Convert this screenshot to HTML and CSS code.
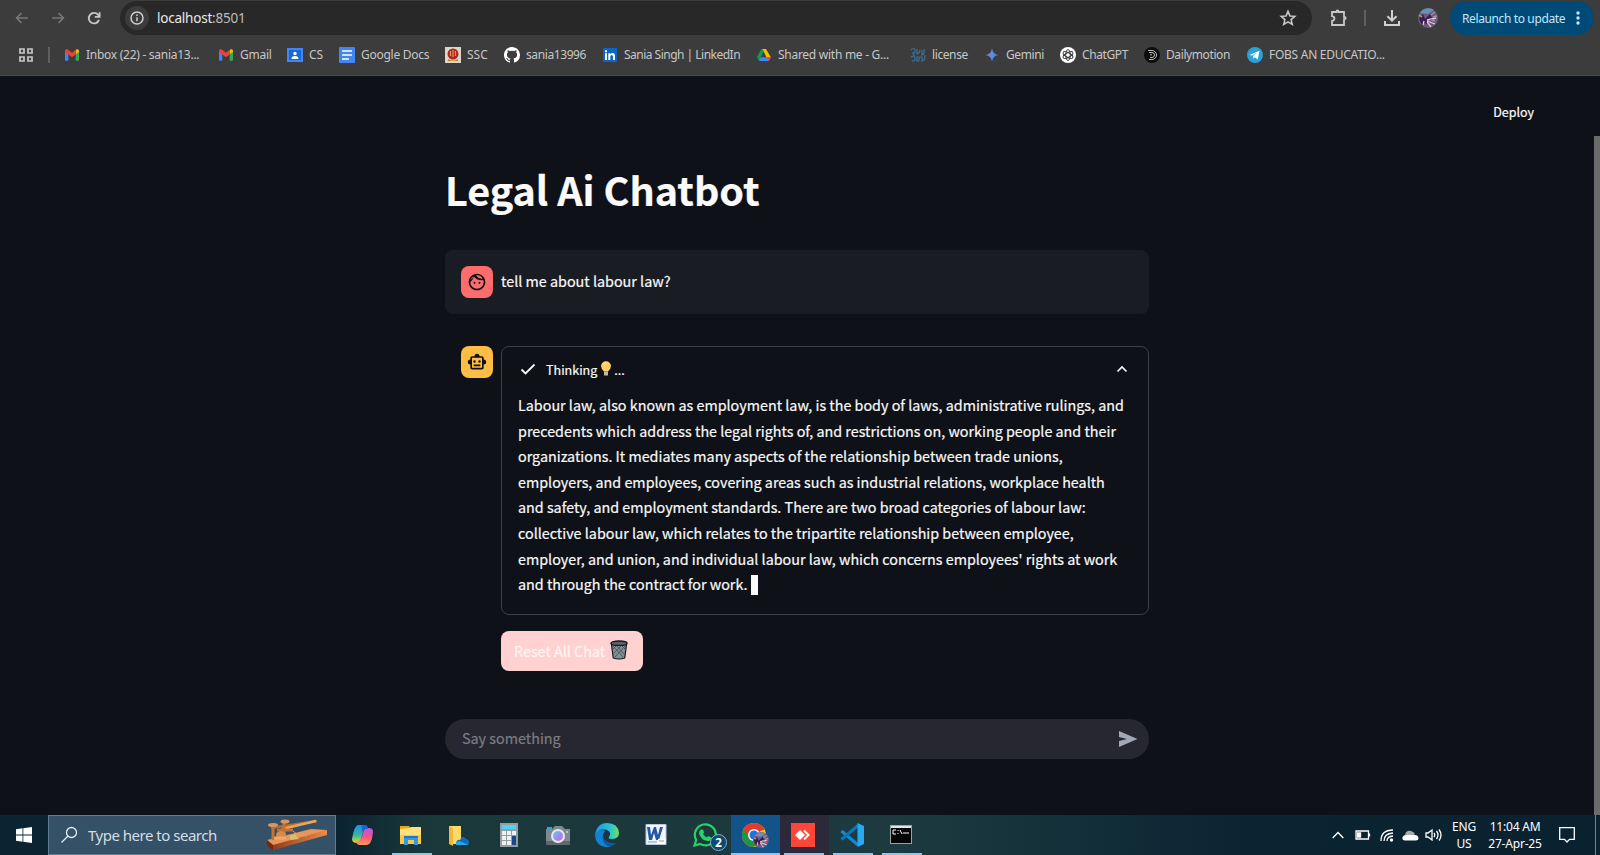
FILE: index.html
```html
<!DOCTYPE html>
<html lang="en"><head><meta charset="utf-8"><title>Legal Ai Chatbot</title><link rel="stylesheet" href="styles.css"></head>
<body>
<svg width="0" height="0" class="defs" aria-hidden="true"><defs>
<linearGradient id="gm"><stop offset="0" stop-color="#a067b5"/><stop offset=".5" stop-color="#5a8fe0"/><stop offset="1" stop-color="#2f80d8"/></linearGradient>
<linearGradient id="cpA" x1="0" y1="0" x2="0" y2="1"><stop offset="0" stop-color="#1f8df0"/><stop offset=".55" stop-color="#2fb7a0"/><stop offset="1" stop-color="#e8d32c"/></linearGradient>
<linearGradient id="cpB" x1="0" y1="0" x2="0" y2="1"><stop offset="0" stop-color="#b35ae8"/><stop offset=".5" stop-color="#f0528c"/><stop offset="1" stop-color="#ff9a50"/></linearGradient>
<linearGradient id="edA" x1="0" y1="0" x2="1" y2="0"><stop offset="0" stop-color="#159de0"/><stop offset=".6" stop-color="#2ac0d8"/><stop offset="1" stop-color="#6be35a"/></linearGradient>
<linearGradient id="wood" x1="0" y1="0" x2="1" y2="0"><stop offset="0" stop-color="#8a3512"/><stop offset="1" stop-color="#e98b48"/></linearGradient>
<linearGradient id="lens" x1="0" y1="0" x2="1" y2="1"><stop offset="0" stop-color="#63c9f5"/><stop offset="1" stop-color="#d05de0"/></linearGradient>
<symbol id="gmail" viewBox="0 0 16 16"><path d="M1 4.5v8.2c0 .6.4 1 1 1h2.300V7z" fill="#4285f4"/><path d="M15 4.500v8.200c0 .6-.4 1-1 1h-2.300V7z" fill="#34a853"/><path d="M11.700 3.700V7.300L15 4.900V4c0-1.700-1.800-2.200-2.700-1.500z" fill="#fbbc04"/><path d="M1 4.900V4c0-1.700 1.700-2.200 2.700-1.500L8 5.800l4.300-3.300-.6 4.900L8 10.200 4.300 7.400z" fill="#ea4335"/></symbol>
<symbol id="photo" viewBox="0 0 20 20"><circle cx="10" cy="10" r="10" fill="#6b5a80"/><path d="M2 5a10 10 0 0 1 14-3L10 6z" fill="#6792b5"/><path d="M1 10l4-4 2 5 5-5 2 4-5 2 3 6-5-3-3 3z" fill="#3b1b54"/><path d="M9 12l9-2M9 13l8 3M9 14l4 5M6 13l-1 4" stroke="#ded0cb" stroke-width="1.300"/><path d="M13 7l4-3M15 9l4-1M12 11l5 2" stroke="#a68ba9" stroke-width="1.500"/><path d="M1 7l3 2" stroke="#b48762" stroke-width="2"/></symbol>
</defs></svg>

<header class="browser">
 <div class="toolbar">
  <svg class="nav" viewBox="0 0 24 24" width="20" height="20" fill="none" stroke="#777" stroke-width="2"><path d="M19 12H6M11.500 6L5.500 12l6 6"/></svg>
  <svg class="nav" viewBox="0 0 24 24" width="20" height="20" fill="none" stroke="#777" stroke-width="2"><path d="M5 12h13M12.500 6l6 6-6 6"/></svg>
  <svg class="nav" viewBox="0 0 24 24" width="20" height="20" fill="none" stroke="#c8c8c8" stroke-width="2.200"><path d="M18 14.300A6.300 6.300 0 1 1 16.800 8L18.500 10"/><path d="M18.700 5v5.700H13"/></svg>
  <div class="address"><span class="info"><svg viewBox="0 0 16 16" width="16" height="16" fill="none" stroke="#d0d0d0" stroke-width="1.500"><circle cx="8" cy="8" r="6"/><path d="M8 7.200v4M8 4.600v1.500"/></svg></span>
   <span class="url">localhost<i>:8501</i></span>
   <svg class="star" viewBox="0 0 24 24" width="20" height="20" fill="none" stroke="#c8c8c8" stroke-width="1.900"><path d="M12 4l2.300 5.500 5.900.5-4.500 3.900 1.400 5.800-5.100-3.100-5.100 3.100 1.400-5.800L3.800 10l5.900-.5z"/></svg></div>
  <svg class="puzzle" viewBox="0 0 18 18" width="18" height="18" fill="none" stroke="#c8c8c8" stroke-width="1.800"><path d="M2 3h4.500V2.500Q6.500 1.500 7.500 1.500T8.500 2.500V3H14v5h.5q1.200 0 1.200 1.100T14.500 10.200H14V16H2v-4q2.400-.4 2.400-2.400T2 7.200z"/></svg>
  <span class="bar"></span>
  <svg class="download" viewBox="0 0 18 18" width="18" height="18" fill="none" stroke="#d0d0d0" stroke-width="2"><path d="M9 1v10.500M4.500 7.200L9 11.700l4.500-4.500M2 12v4h14v-4"/></svg>
  <svg class="profile" width="20" height="20"><use href="#photo"/></svg>
  <div class="relaunch"><span>Relaunch to update</span><svg width="4" height="14" viewBox="0 0 4 14" fill="#c2e7ff"><circle cx="2" cy="2" r="1.700"/><circle cx="2" cy="7" r="1.700"/><circle cx="2" cy="12" r="1.700"/></svg></div>
 </div>
 <nav class="bookmarks">
  <svg class="apps" viewBox="0 0 14 14" width="14" height="14" fill="none" stroke="#c8c8c8" stroke-width="1.700"><path d="M1 1h4v4H1zM9 1h4v4H9zM1 9h4v4H1zM9 9h4v4H9z"/></svg>
  <span class="bar"></span>
  <div class="marks">
  <a><svg><use href="#gmail"/></svg><span class="normal">Inbox (22) - sania13...</span></a>
  <a><svg><use href="#gmail"/></svg><span class="normal">Gmail</span></a>
  <a><svg viewBox="0 0 16 16"><path fill="#4285f4" d="M0 1h16v14H0z"/><path fill="#1967d2" d="M2 3h12v10H2z"/><circle cx="8" cy="6.500" r="1.700" fill="#fff"/><path fill="#fff" d="M4.500 12q0-3 3.500-3t3.500 3z"/></svg><span>CS</span></a>
  <a><svg viewBox="0 0 16 16"><rect width="16" height="16" rx="1" fill="#4285f4"/><path stroke="#fff" stroke-width="1.700" d="M3 4h10M3 8h10M3 12h7"/></svg><span class="normal">Google Docs</span></a>
  <a><svg viewBox="0 0 16 16"><path fill="#ddd5c8" d="M0 0h16v16H0z"/><circle cx="8" cy="7" r="5.500" fill="#b42222"/><path d="M8 3v7M5.500 4v5M10.500 4v5" stroke="#d7a24c" stroke-width="1.200"/><path d="M3 12q5 3 10 0v2H3z" fill="#b58422"/></svg><span>SSC</span></a>
  <a><svg viewBox="0 0 16 16"><path fill="#fff" d="M8 0C3.580 0 0 3.580 0 8c0 3.540 2.290 6.530 5.470 7.590.4.070.55-.17.55-.38 0-.19-.01-.82-.01-1.490-2.010.37-2.530-.49-2.690-.94-.09-.23-.48-.94-.82-1.130-.28-.15-.68-.52-.01-.53.63-.01 1.080.58 1.230.82.72 1.210 1.870.87 2.330.66.070-.52.28-.87.51-1.070-1.780-.2-3.640-.89-3.640-3.950 0-.87.31-1.590.82-2.150-.08-.2-.36-1.020.08-2.120 0 0 .67-.21 2.200.82.640-.18 1.320-.27 2-.27s1.360.09 2 .27c1.530-1.040 2.200-.82 2.200-.82.44 1.100.16 1.920.08 2.120.51.56.82 1.270.82 2.150 0 3.070-1.870 3.750-3.650 3.950.29.25.54.73.54 1.480 0 1.070-.01 1.930-.01 2.200 0 .21.15.46.55.38A8.010 8.010 0 0 0 16 8c0-4.420-3.580-8-8-8z"/></svg><span class="tight">sania13996</span></a>
  <a><svg viewBox="0 0 16 16"><path fill="#0a66c2" d="M1 1h14v14H1z"/><path fill="#fff" d="M3 6.300h2V13H3zM3 3.200h2v2H3zM6.300 6.300h2v1Q9 6.100 10.500 6.100 13 6.100 13 9v4h-2V9.500Q11 7.900 9.700 7.900T8.300 9.500V13h-2z"/></svg><span class="tighter">Sania Singh | LinkedIn</span></a>
  <a><svg viewBox="0 0 16 16"><path fill="#0f9d58" d="M5.500 2h3L3.200 14 1 10z"/><path fill="#fbbc04" d="M6.500 2h3.500l5 8.500h-4.500z"/><path fill="#4285f4" d="M4.800 10.300H15L12.800 14H3z"/><path fill="#ea4335" d="M11.300 10.300H15L12.800 14z"/></svg><span class="normal">Shared with me - G...</span></a>
  <a><svg viewBox="0 0 16 16" fill="none" stroke="#3d7199" stroke-width="1.200"><path d="M1 3q3-3 4 0t-3 3q4 1 1 3M7 2v5q3-1 3-4M12 3v5q3-1 2-6M1 10q3-2 4 1t-3 3M7 9v5h2v-4h3v4q3 0 3-6"/></svg><span class="tight">license</span></a>
  <a><svg viewBox="0 0 16 16"><path fill="url(#gm)" d="M8 1.500Q8.800 7.200 14.500 8 8.800 8.800 8 14.500 7.200 8.800 1.500 8 7.200 7.200 8 1.500z"/></svg><span class="tight">Gemini</span></a>
  <a><svg viewBox="0 0 16 16"><circle cx="8" cy="8" r="8" fill="#fff"/><g fill="none" stroke="#333" stroke-width=".9"><ellipse cx="8" cy="8" rx="2.300" ry="5.500"/><ellipse cx="8" cy="8" rx="2.300" ry="5.500" transform="rotate(60 8 8)"/><ellipse cx="8" cy="8" rx="2.300" ry="5.500" transform="rotate(120 8 8)"/></g></svg><span class="tight">ChatGPT</span></a>
  <a><svg viewBox="0 0 16 16"><circle cx="8" cy="8" r="8" fill="#0d0d0d"/><g fill="none" stroke="#bbb" stroke-width="1"><path d="M4 3.500h4a4.500 4.500 0 0 1 0 9H5M5 5.500h3a2.500 2.500 0 0 1 0 5H6M6 7.800h2"/></g></svg><span class="tight">Dailymotion</span></a>
  <a><svg viewBox="0 0 16 16"><circle cx="8" cy="8" r="8" fill="#2ba0da"/><path fill="#fff" d="M2.500 7.900l10-4.100-1.700 8.700-3-2.200-1.500 1.400-.2-2.600 4.100-3.700-5 3.100z"/></svg><span class="normal">FOBS AN EDUCATIO...</span></a>
  </div>
 </nav>
</header>

<main class="page">
 <div class="pagebar"><span>Deploy</span></div>
 <div class="column">
  <h1>Legal Ai Chatbot</h1>
  <section class="message user"><div class="avatar red"><svg viewBox="0 0 24 24" width="20" height="20"><path fill="#0e1117" d="M10.250 13a1.250 1.250 0 1 1-2.500 0 1.250 1.250 0 0 1 2.500 0zM15 11.750a1.250 1.250 0 1 0 0 2.500 1.250 1.250 0 0 0 0-2.500zM22 12c0 5.520-4.480 10-10 10S2 17.520 2 12 6.480 2 12 2s10 4.480 10 10zM10.660 4.120A9.950 9.950 0 0 0 17.500 8c.46 0 .91-.05 1.340-.12A8 8 0 0 0 10.660 4.120zM4.420 9.470a8.050 8.050 0 0 0 3.660-4.440 8.040 8.040 0 0 0-3.660 4.440zM20 12c0-.78-.12-1.530-.33-2.240-.7.150-1.420.24-2.170.24a11.950 11.950 0 0 1-9.140-4.250A12 12 0 0 1 4.010 11.860C4 11.900 4 11.950 4 12a8 8 0 0 0 16 0z"/></svg></div><p>tell me about labour law?</p></section>
  <section class="message bot"><div class="avatar gold"><svg viewBox="0 0 24 24" width="20" height="20"><path fill="#0e1117" fill-rule="evenodd" d="M20 9V7c0-1.100-.9-2-2-2h-3a3 3 0 0 0-6 0H6c-1.100 0-2 .9-2 2v2a3 3 0 0 0 0 6v4c0 1.100.9 2 2 2h12c1.100 0 2-.9 2-2v-4a3 3 0 0 0 0-6zm-2 10H6V7h12v12zM9 10a1.500 1.500 0 1 1 0 3 1.500 1.500 0 0 1 0-3zM15 10a1.500 1.500 0 1 1 0 3 1.500 1.500 0 0 1 0-3zM8 15h8v2H8z"/></svg></div>
   <div class="reply"><div class="status"><div class="summary"><svg viewBox="0 0 20 20" width="20" height="20" fill="none" stroke="#fafafa" stroke-width="1.800"><path d="M3.500 10.500l4 4 9-9"/></svg><span>Thinking</span><svg class="bulb" width="12" height="16" viewBox="0 0 12 16"><path fill="#ffcf65" d="M4 10.500Q1 7.500 1 5A5 4.700 0 0 1 11 5Q11 7.500 8 10.500z"/><path d="M3.500 3Q4.500 1.500 6 1.700" stroke="#fff0a8" fill="none"/><path fill="#c4b9a8" d="M4 10.500h4v4H4z"/></svg><span>...</span><svg class="chevron" viewBox="0 0 12 8" width="12" height="8" fill="none" stroke="#fafafa" stroke-width="1.700"><path d="M1.500 6.500L6 2l4.500 4.500"/></svg></div>
   <div class="answer"><p>Labour law, also known as employment law, is the body of laws, administrative rulings, and</p><p>precedents which address the legal rights of, and restrictions on, working people and their</p><p>organizations. It mediates many aspects of the relationship between trade unions,</p><p>employers, and employees, covering areas such as industrial relations, workplace health</p><p>and safety, and employment standards. There are two broad categories of labour law:</p><p>collective labour law, which relates to the tripartite relationship between employee,</p><p>employer, and union, and individual labour law, which concerns employees' rights at work</p><p>and through the contract for work.<span class="caret"></span></p></div></div>
   <button class="reset"><span>Reset All Chat</span><svg width="18" height="20" viewBox="0 0 18 20"><path d="M1.300 3.200L3.300 18q5.700 2 11.400 0l2-14.800z" fill="#839098" stroke="#15191c" stroke-width="1.200"/><path d="M3 6l10 11M7 6l7 8M12 6l3 3M15 6L5 17M11 6l-7 7M6 6L3 9" stroke="#4c575d"/><ellipse cx="9" cy="3.200" rx="8" ry="2.200" fill="#59666c" stroke="#15191c" stroke-width="1.300"/></svg></button></div></section>
  <div class="prompt"><span>Say something</span><svg viewBox="0 0 20 18" width="20" height="18"><path fill="#a3a8b8" d="M1 1L19.500 9 1 17V11L9 9 1 7z"/></svg></div>
 </div>
 <div class="scroll"></div>
</main>

<footer class="taskbar">
 <div class="start"><svg viewBox="0 0 16 16" width="16" height="16" fill="#fff"><path d="M0 2.200L6.500 1.300V7.600H0zM7.300 1.200L16 0v7.600H7.300zM0 8.400h6.500v6.300L0 13.800zM7.300 8.400H16V16l-8.700-1.200z"/></svg></div>
 <div class="search"><svg viewBox="0 0 18 18" width="18" height="18" fill="none" stroke="#e6edf2" stroke-width="1.300"><circle cx="11.500" cy="6.500" r="5"/><path d="M8 10L1.500 16.500"/></svg><span>Type here to search</span>
 <svg class="telegraph" viewBox="0 0 62 34" width="62" height="34"><path fill="url(#wood)" d="M1 22L44 15l17-3v5L7 32l-6-4z"/><path fill="#e6955b" d="M1 22l44-11 16 1L7 27z"/><path fill="#702b0f" d="M1 22l6 5v5l-6-4z"/><path fill="#d9bc73" d="M23 18l6-2 4 5-8 1z"/><path d="M5 10L51 3" stroke="#b96b2d" stroke-width="2.500"/><path d="M16 11l34-8" stroke="#eba563" stroke-width="2.500"/><path d="M26 12q5 6 15 6" stroke="#e0a369" fill="none"/><path d="M7 8v14M18 3v15M11 12h16" stroke="#c37131" stroke-width="3"/><ellipse cx="7" cy="7" rx="5" ry="2" fill="#dd945d"/><ellipse cx="19" cy="3.500" rx="4.500" ry="2" fill="#dd945d"/><ellipse cx="15" cy="17" rx="5" ry="4" fill="#d98948"/><path d="M8 20h12" stroke="#eca969" stroke-width="3"/></svg></div>
 <div class="tasks">
  <div class="task"><svg viewBox="0 0 24 24"><path fill="url(#cpA)" d="M8 2h7q2 0 3 3l-4 1-3 10q-1 4-4 4-5 0-5-4 2-13 6-14z"/><path fill="url(#cpB)" d="M17 5h2q4 0 4 4-1 10-4 12-1 1-3 1H9q-2 0-3-3l3-1q2-1 3-5l2-6q1-2 3-2z"/><path fill="#2361d0" d="M12 2h3q2 0 3 4h-3q-2 0-3 3-1-4 0-7z"/></svg></div>
  <div class="task open"><svg viewBox="0 0 24 24"><path fill="#e9a60d" d="M1 3h9l2 3H1z"/><path fill="#ffe07a" d="M1 6l9-1 2-1h10v17H1z"/><path fill="#ffc83d" d="M1 12h21v9H1z"/><path fill="#3498e7" d="M5 22v-9h14v9h-4v-5H9v5z"/><path fill="#1d78ca" d="M5 13h14v2H5z"/></svg></div>
  <div class="task"><svg viewBox="0 0 24 24"><path fill="#ffda6b" d="M1 3h12v18H1z"/><path fill="#efb83b" d="M1 3l4 2v18l-4-2z"/><path fill="#0f6cbd" d="M9 22q-2-2 0-4 1-2 3-1 2-6 6-1 3 0 3 4 0 2-3 2z"/><path fill="#2ca5ed" d="M8 22q-1-3 3-4l10 4z"/></svg></div>
  <div class="task"><svg viewBox="0 0 24 24"><path fill="#949da2" d="M3 0h18v24H3z"/><path fill="#50d3f5" d="M5 2h14v4H5z"/><path fill="#edf1f2" d="M5 8h4v4H5zM10 8h4v4h-4zM15 8h4v4h-4zM5 13h4v4H5zM10 13h4v4h-4zM5 18h4v4H5zM10 18h4v4h-4z"/><path fill="#164986" d="M15 13h4v9h-4z"/></svg></div>
  <div class="task"><svg viewBox="0 0 24 24"><path fill="#7e8990" d="M0 6h6l3-3h7l3 3h5v16H0z"/><path fill="#5e686e" d="M0 18h24v4H0z"/><path fill="#20a9e3" d="M1 4h5v2H1z"/><circle cx="12" cy="13" r="7" fill="#e6e8ed"/><circle cx="12" cy="13" r="5" fill="url(#lens)"/><circle cx="21" cy="9" r="1" fill="#c8d0d2"/></svg></div>
  <div class="task"><svg viewBox="0 0 24 24"><path fill="#0c59a4" d="M1 8q4-5 10-2-4 3-3 7 2 8 13 7-4 4-9 4Q0 23 0 12z"/><path fill="url(#edA)" d="M0 12Q2 0 12 0q11 0 12 10 0 6-8 6-3 0-2-2 3-5-2-7Q5 4 0 12z"/><path fill="#1581d1" d="M0 12q4-7 10-4-5 6 0 13 2 2 5 3Q1 25 0 12z"/></svg></div>
  <div class="task"><svg viewBox="0 0 24 24"><path fill="#f2f6fb" stroke="#b8c7da" d="M2 1.500h20v20H2z"/><path fill="#2457a4" d="M3 4l3 0 1 8 3-8h2l2 8 2-8h3l-4 13h-3l-2-7-2 7H5z"/><path d="M14 16l8-1-1 6h-8z" fill="#fff"/><path d="M4 19h9M15 18h5" stroke="#7d9bc2"/></svg></div>
  <div class="task wa"><svg viewBox="0 0 24 24"><path fill="none" stroke="#25d366" stroke-width="2.200" d="M1.500 22.500L3.200 17A10.500 10.500 0 1 1 7 20.900z"/><path fill="#25d366" d="M8 6.500l2 0 1.200 3-1.200 1.600q1.500 2.400 4 3.400l1.300-1.600 3.100 1.500q-.4 3.700-3.900 3.600Q8 17 6 10.500 6 7.500 8 6.500z"/></svg><b>2</b></div>
  <div class="task chrome"><svg viewBox="0 0 24 24"><circle cx="12" cy="12" r="12" fill="#fbc116"/><path fill="#e33b2e" d="M12 12L1.600 6A12 12 0 0 1 22.400 6z"/><path fill="#229342" d="M12 12L1.600 6A12 12 0 0 0 12 24l5-9z"/><path fill="#e33b2e" d="M1.600 6h20.800v1H12l-5 7z"/><circle cx="12" cy="12" r="6" fill="#fff"/><circle cx="12" cy="12" r="4.500" fill="#1a73e8"/></svg><svg class="badge"><use href="#photo"/></svg></div>
  <div class="task anydesk"><svg viewBox="0 0 24 24"><path fill="#ff4438" d="M0 0h24v24H0z"/><path fill="#fff" d="M4 12l5-5 5 5-5 5z"/><path d="M13 7.500l4.500 4.500-4.500 4.500" stroke="#fff" stroke-width="2" fill="none"/></svg></div>
  <div class="task open code"><svg viewBox="0 0 24 24"><path d="M1.500 8L18 22" stroke="#1289d2" stroke-width="3.300"/><path d="M1.500 16.500L18 2.500" stroke="#0875b8" stroke-width="3.300"/><path fill="#29a9f2" d="M17.500 0L24 3v18l-6.500 3z"/></svg></div>
  <div class="task open"><svg viewBox="0 0 24 24"><path fill="#9ca0a3" d="M1 2h22v19H1z"/><path fill="#e3e5e6" d="M2 3h20v2H2z"/><path fill="#050505" d="M2 5h20v15H2z"/><path d="M7 7H4v4h3M9 7v1M9 10v1M11 7l2 4M14 10h6" stroke="#fff" fill="none"/></svg></div>
 </div>
 <div class="tray">
  <svg class="up" width="12" height="8" viewBox="0 0 12 8"><path d="M.7 7L6 1.500 11.300 7"/></svg>
  <svg class="battery" width="16" height="10" viewBox="0 0 16 10"><path d="M1 1h12.500v8H1zM14.500 3.500v3"/><path d="M2.500 3h3v4h-3z" class="solid"/></svg>
  <svg class="wifi" width="14" height="14" viewBox="0 0 14 14"><path d="M1 13Q1 2 13 2M4 13Q4 5.500 13 5M7 13q0-4.500 6-5"/><circle cx="11.500" cy="12" r="1" class="solid"/></svg>
  <svg width="17" height="11" viewBox="0 0 17 11" class="cloud"><path fill="#ababab" d="M3 5q1-5 6-4 3 1 4 3l-5 4z"/><path fill="#fff" d="M3 10.500q-3 0-2.500-3Q1 5 4 5l9 0q3 0 3.500 3 0 2.500-3 2.500z"/></svg>
  <svg class="volume" width="18" height="14" viewBox="0 0 18 14"><path d="M1 5h2l4-3v10L3 9H1zM9 5q1.500 2 0 4M11.500 3q3 4 0 8M14 1.500q4 5.500 0 11"/></svg>
  <div class="lang"><span>ENG</span><span>US</span></div>
  <div class="clock"><span>11:04 AM</span><span>27-Apr-25</span></div>
  <svg class="note" width="16" height="16" viewBox="0 0 16 16"><path d="M.7.7h14.600v11.600H10.500L8 15 5.500 12.300H.7z"/></svg>
  <i class="edge"></i>
 </div>
</footer>
</body></html>
```
FILE: styles.css
```css
*{box-sizing:border-box}
body{margin:0;width:1600px;height:855px;overflow:hidden;background:#0e1117;color:#fafafa;font-family:"Noto Sans","Open Sans",sans-serif;display:flex;flex-direction:column}
svg{display:block;flex:none}
.defs{position:absolute}
p,h1{margin:0;white-space:nowrap}
span{white-space:nowrap}
.browser{height:76px;background:#3c3c3c;border-bottom:1px solid #4a4b48;flex:none}
.toolbar{height:35px;display:flex;align-items:center;padding-left:12px}
.nav{margin-right:16px}
.address{height:34px;width:1192px;margin:1px 0 0;background:#282828;border-radius:17px;display:flex;align-items:center;padding:0 14px 0 5px}
.info{width:24px;height:24px;border-radius:50%;background:#3c3c3c;display:grid;place-items:center}
.url{margin-left:8px;font-size:13.500px;letter-spacing:-.22px;color:#e8e8e8;flex:1}
.url i{font-style:normal;color:#bcbcbc}
.puzzle{margin-left:18px}
.bar{width:2px;height:16px;background:#5f5f5f}
.toolbar .bar{margin-left:16px}
.download{margin-left:17px}
.profile{margin-left:17px}
.relaunch{margin:1px 0 0 12px;width:144px;height:34px;border-radius:17px;background:#004a77;color:#c2e7ff;font-size:12px;letter-spacing:-.38px;display:flex;align-items:center;padding-left:12px;gap:11px}
.bookmarks{height:40px;display:flex;align-items:center;padding-left:19px;font-size:12px;color:#c7c7c7}
.bookmarks>.bar{margin:0 14px 0 15px}
.marks{display:grid;grid-template-columns:154px 69px 52px 106px 59px 98px 154px 154px 74px 76px 84px 103px 150px}
.marks a{display:flex;align-items:center;gap:6px}
.marks span{padding-bottom:2px}
.marks svg{width:16px;height:16px}
.normal{letter-spacing:-.27px}
.tight{letter-spacing:-.4px}
.tighter{letter-spacing:-.51px}
.page{height:739px;position:relative;font-family:"Noto Sans CJK SC","Source Sans Pro",sans-serif;-webkit-text-stroke:.2px}
.pagebar{height:74px;padding:25px 66px 0 0;text-align:right;font-size:12.500px;line-height:22px;font-weight:400}
.column{width:704px;margin-left:445px}
h1{font-size:39.500px;line-height:52px;font-weight:700;padding-top:13px;height:100px}
.message{display:flex;gap:8px;padding:16px 0 16px 16px}
.user{height:64px;background:#1a1c24;border-radius:8px;margin-bottom:16px}
.user p{font-size:14.350px;line-height:30px}
.avatar{width:32px;height:32px;border-radius:8px;display:grid;place-items:center;flex:none}
.red{background:#ff6c6c}
.gold{background:#ffbd45}
.status{width:648px;height:269px;border:1px solid #3d4045;border-radius:8px;padding:0 16px}
.summary{height:45px;display:flex;align-items:center;font-size:12.550px;padding-bottom:1px}
.summary>svg:first-child{margin-right:8px}
.bulb{margin:0 2px 0 3px}
.chevron{margin-left:auto;margin-right:4px}
.answer{font-size:14.330px;line-height:25.600px}
.answer p{height:25.600px}
.caret{display:inline-block;width:7px;height:20px;background:#fafafa;margin-left:3px;vertical-align:-5px}
.reset{margin-top:16px;width:142px;height:40px;border:0;border-radius:8px;background:#ffd1d1;color:#fff5f5;font:400 14.350px "Noto Sans CJK SC",sans-serif;padding:0 13px 2px;display:flex;align-items:center;gap:5px}
.prompt{margin-top:32px;height:40px;border-radius:20px;background:#262730;color:#7c7d83;display:flex;align-items:center;justify-content:space-between;padding:0 11px 0 17px;font-size:14.350px}
.prompt span{padding-bottom:3px}
.scroll{position:absolute;right:0;top:60px;width:6px;height:679px;background:#6b6b6b}
.taskbar{height:40px;display:flex;background:linear-gradient(90deg,#0a2431 0,#0a2431 340px,#1a373a 420px,#1d3a40 900px,#17343c 1000px,#0a2431 1250px,#0a2230)}
.start{width:48px;display:grid;place-items:center}
.search{width:288px;border:1px solid #617d91;background:#345167;display:flex;align-items:center;padding-left:11px;color:#d5dde3;font-size:15px}
.search>span{margin-left:10px;flex:1;letter-spacing:-.49px}
.telegraph{margin-right:7px}
.tasks{display:flex;margin-left:3px}
.task{width:49px;display:flex;justify-content:center;align-items:center;position:relative;padding-right:3px}
.task>svg{width:24px;height:24px}
.open:after,.anydesk:after,.chrome:after{content:"";position:absolute;left:4px;right:5px;bottom:0;height:2px;background:#91c3ee}
.chrome{background:#12548a}
.chrome:after{left:0;right:0}
.anydesk{background:#2c2a3a}
.wa b{position:absolute;left:28px;top:19px;width:17px;height:17px;border-radius:50%;border:1px solid #8cb0ca;background:#0c4a73;font-size:12px;line-height:15px;text-align:center}
.task .badge{position:absolute;left:22px;top:17px;width:16px;height:16px}
.tray{margin-left:auto;display:flex;align-items:center;font-size:12px;color:#fff}
.tray svg{fill:none;stroke:#fff;stroke-width:1.300}
.tray .solid{fill:#fff}
.up{margin-right:11px}
.battery{margin-right:9px}
.wifi{margin-right:8px}
.tray .cloud{stroke:none;margin-right:6px}
.volume{margin-right:9px}
.lang,.clock{display:flex;flex-direction:column;line-height:17.500px;text-align:center}
.lang{margin-right:12px;width:24px;letter-spacing:-.2px}
.clock{width:54px;align-items:center;letter-spacing:-.2px}
.tray .note{margin:0 20px 0 17px}
.edge{width:1px;height:40px;background:#70828c;margin-right:4px}
```
